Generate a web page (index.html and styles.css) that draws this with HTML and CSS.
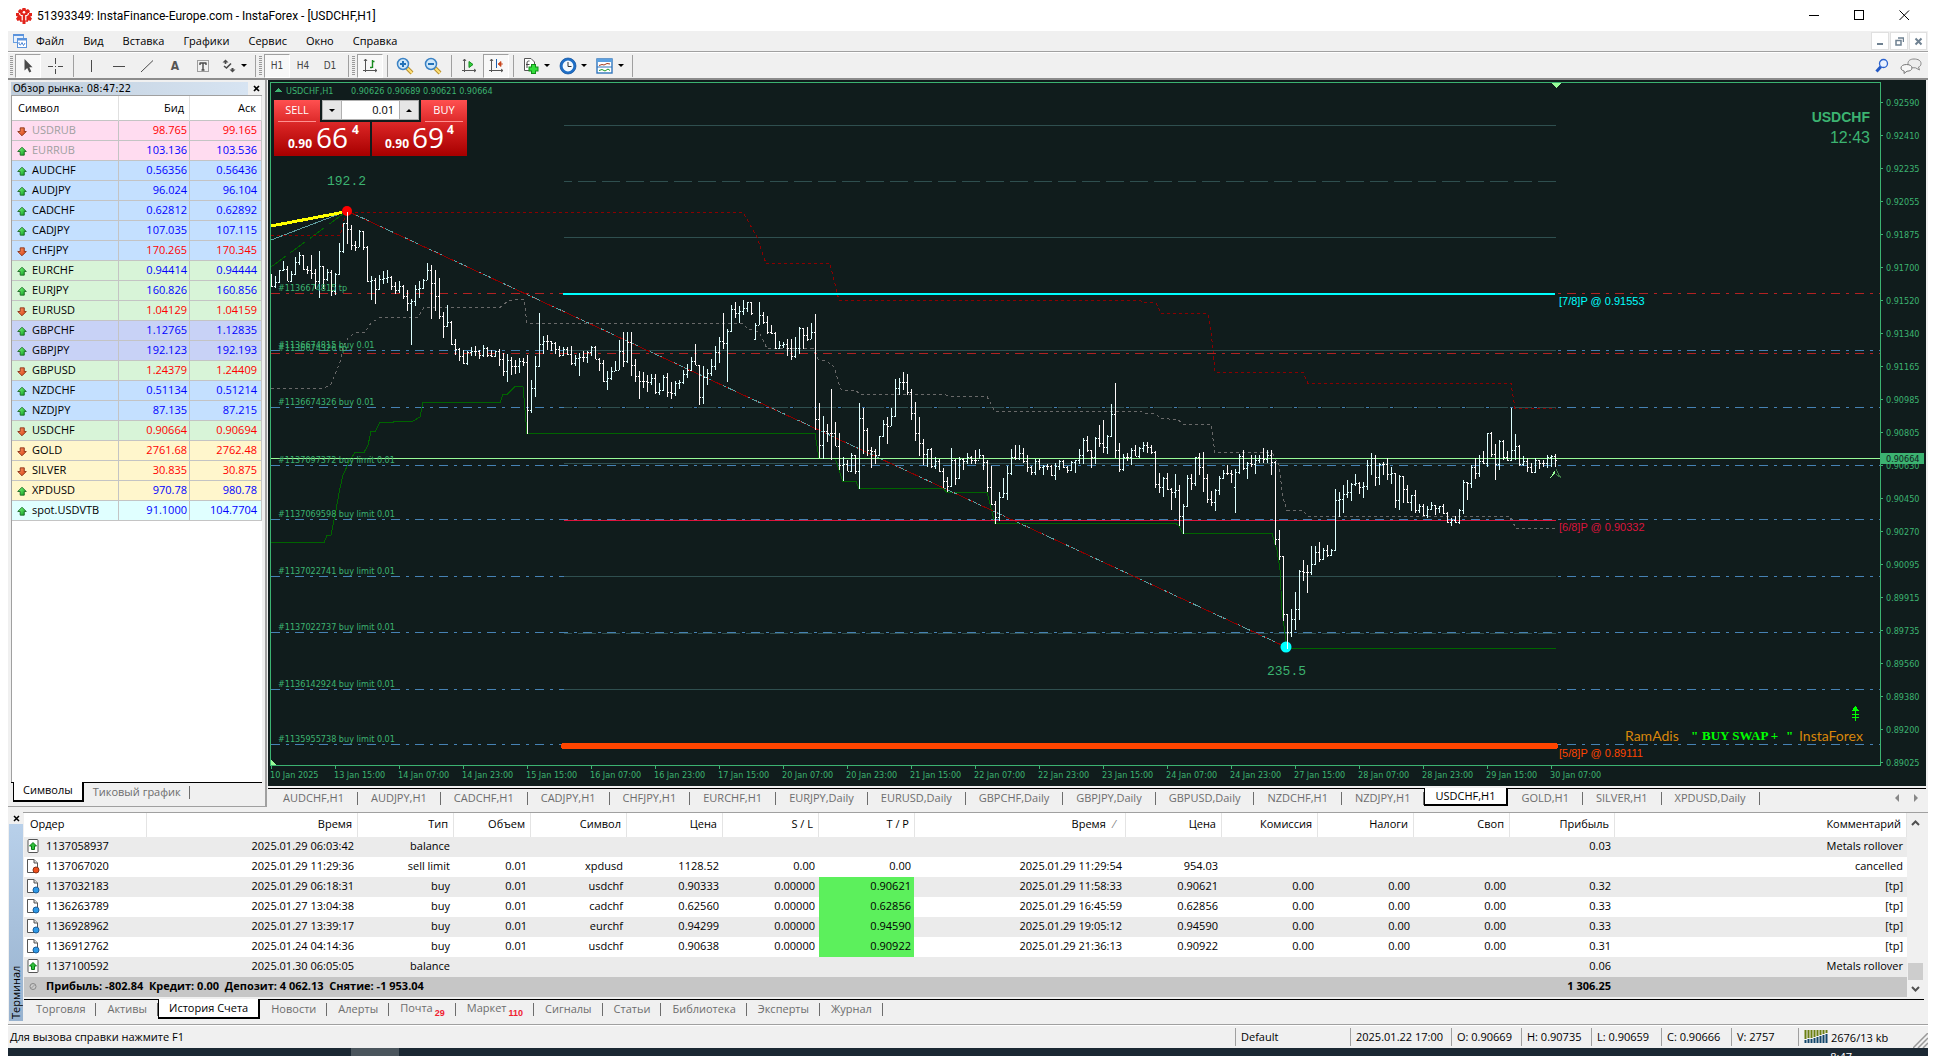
FILE: index.html
```html
<!DOCTYPE html>
<html lang="ru">
<head>
<meta charset="utf-8">
<title>51393349: InstaFinance-Europe.com - InstaForex - [USDCHF,H1]</title>
<link rel="stylesheet" href="styles.css">
</head>
<body>
<svg class="defs" aria-hidden="true">
  <defs>
    <linearGradient id="gup" x1="0" y1="0" x2="1" y2="1"><stop offset="0" stop-color="#7dff7d"/><stop offset="1" stop-color="#0a9a1e"/></linearGradient>
    <linearGradient id="gdn" x1="0" y1="0" x2="1" y2="1"><stop offset="0" stop-color="#ff9a6a"/><stop offset="1" stop-color="#d33a0c"/></linearGradient>
    <symbol id="up" viewBox="0 0 11 11"><path d="M5.5 .8L10.2 5.5H8V9.5H3.5V5.5H.8Z" fill="url(#gup)" stroke="#1c6b25"/></symbol>
    <symbol id="down" viewBox="0 0 11 11"><path d="M5.5 10.2L10.2 5.5H8V1.5H3.5V5.5H.8Z" fill="url(#gdn)" stroke="#8a3014"/></symbol>
    <symbol id="balance" viewBox="0 0 14 16"><rect x="2" y="1.500" width="10" height="13" rx="1" fill="#fff" stroke="#555"/><path d="M7 4.500L10.500 8H8.500V11.500H5.500V8H3.500Z" fill="#2fc23a" stroke="#0b7a18"/></symbol>
    <symbol id="sheet" viewBox="0 0 14 16"><path d="M1.500 1.500H8L11.500 5V14.500H1.500Z" fill="#fff" stroke="#555"/><path d="M8 1.500V5H11.500" fill="#ddd" stroke="#555"/></symbol>
  </defs>
</svg>

<div class="window">
  <header class="titlebar">
    <svg class="app-icon" width="16" height="16" viewBox="0 0 16 16"><path d="M6.500 0H9.500L10 2L12 1L14 3L13.200 5H16V8L14.200 8.500L16 10.500L14.500 13L12.500 12.300L11.500 14L9.500 13.500V16H6.500V13.500L4.500 14L3.500 12.300L1.500 13L0 10.500L1.800 8.500L0 8V5H2.800L2 3L4 1L6 2Z" fill="#e2231a"/><path d="M6.200 7V12.500M9.800 7V12.500M3.500 5C3.500 7.500 5 7.500 6.200 8M12.500 5C12.500 7.500 11 7.500 9.800 8" fill="none" stroke="#fff" stroke-width="1.200"/><circle cx="8" cy="4.300" r="1.300" fill="#fff"/></svg>
    <h1>51393349: InstaFinance-Europe.com - InstaForex - [USDCHF,H1]</h1>
    <div class="winbtns">
      <button aria-label="Свернуть"><svg width="11" height="11"><path d="M0 5.500H10" stroke="#000"/></svg></button>
      <button aria-label="Развернуть"><svg width="11" height="11"><rect x=".5" y=".5" width="9" height="9" fill="none" stroke="#000"/></svg></button>
      <button aria-label="Закрыть"><svg width="11" height="11"><path d="M.5 .5L10 10M10 .5L.5 10" stroke="#000"/></svg></button>
    </div>
  </header>

  <nav class="menubar">
    <svg width="14" height="14" viewBox="0 0 14 14"><rect x=".5" y=".5" width="10" height="8" fill="#e8f1fc" stroke="#6a9fe0"/><path d="M0 1H11" stroke="#5b93dc" stroke-width="2"/><rect x="4.500" y="4.500" width="9" height="9" fill="#fff" stroke="#5b93dc"/><path d="M4 5.500H14" stroke="#5b93dc" stroke-width="2"/><path d="M6 8V10L7.500 11L9 8.500L10.500 11.500L12 9" fill="none" stroke="#4a86d8"/></svg>
    <button>Файл</button><button>Вид</button><button>Вставка</button><button>Графики</button><button>Сервис</button><button>Окно</button><button>Справка</button>
    <div class="mdi">
      <button aria-label="Свернуть окно"><svg width="9" height="9"><path d="M1 7H7" stroke="#6f8191" stroke-width="2"/></svg></button>
      <button aria-label="Восстановить окно"><svg width="9" height="9"><path d="M3 1H8.500V5M1 3.500H6V8H1Z" fill="none" stroke="#6f8191" stroke-width="1.500"/></svg></button>
      <button aria-label="Закрыть окно"><svg width="9" height="9"><path d="M1.500 1.500L7.500 7.500M7.500 1.500L1.500 7.500" stroke="#6f8191" stroke-width="2"/></svg></button>
    </div>
  </nav>

  <div class="toolbar">
    <i class="grip"></i>
    <button class="on" aria-label="Курсор"><svg width="12" height="16"><path d="M2.500 1V12.500L5.200 10L7.300 14.500L9.300 13.500L7.300 9.300H10.500Z" fill="#4a4a4a"/></svg></button>
    <button class="w28" aria-label="Перекрестие"><svg width="16" height="16"><path d="M8.500 0V6M8.500 11V16M1 8.500H6M11 8.500H16M8.500 8V9" stroke="#4a4a4a"/></svg></button>
    <i class="sep"></i>
    <button class="w28" aria-label="Вертикальная линия"><svg width="16" height="16"><path d="M8.500 2V14" stroke="#4a4a4a"/></svg></button>
    <button class="w28" aria-label="Горизонтальная линия"><svg width="16" height="16"><path d="M2 8.500H14" stroke="#4a4a4a"/></svg></button>
    <button class="w28" aria-label="Трендовая линия"><svg width="16" height="16"><path d="M2 14L14 2.500" stroke="#4a4a4a"/></svg></button>
    <button class="w28 tool-a" aria-label="Текст">A</button>
    <button class="w28" aria-label="Текстовая метка"><svg width="16" height="16"><rect x="2.500" y="2.500" width="11" height="11" fill="none" stroke="#4a4a4a" stroke-dasharray="1 1"/><path d="M4.500 5H11.500M8 5V12M5 5V7M11 5V7M6.500 12H9.500" stroke="#4a4a4a" stroke-width="1.400"/></svg></button>
    <button class="drop w36" aria-label="Стрелки"><svg width="16" height="16"><path d="M4.500 1.500L7.500 4.500H1.500Z" fill="#4a4a4a"/><path d="M4.500 4V6M3 8L5.500 10L10 5.500" fill="none" stroke="#4a4a4a" stroke-width="1.600"/><path d="M11.500 14.500L8.500 11.500H14.500Z" fill="#4a4a4a"/><path d="M11.500 10V12" stroke="#4a4a4a" stroke-width="2"/></svg><i class="caret"></i></button>
    <i class="sep"></i><i class="grip"></i>
    <button class="on tf">H1</button><button class="tf">H4</button><button class="w28 tf">D1</button>
    <i class="sep"></i><i class="grip"></i>
    <button class="on" aria-label="Бары"><svg width="16" height="16"><path d="M3.500 1V14M1 12.500H15M2 3L3.500 1L5 3M13 11L15 12.500L13 14" fill="none" stroke="#555"/><path d="M10.500 2V10M10 3.500H12.500M8 9.500H10" stroke="#168a1e" stroke-width="1.400"/></svg></button>
    <i class="sep"></i>
    <button class="w28" aria-label="Увеличить"><svg width="18" height="18"><path d="M11 11L16 16" stroke="#b98f2c" stroke-width="4"/><path d="M11 11L16 16" stroke="#ffe27a" stroke-width="2"/><circle cx="7" cy="7" r="5.500" fill="#cfe8fa" stroke="#3b82c4" stroke-width="1.500"/><path d="M4 7H10M7 4V10" stroke="#2272b8" stroke-width="2"/></svg></button>
    <button class="w28" aria-label="Уменьшить"><svg width="18" height="18"><path d="M11 11L16 16" stroke="#b98f2c" stroke-width="4"/><path d="M11 11L16 16" stroke="#ffe27a" stroke-width="2"/><circle cx="7" cy="7" r="5.500" fill="#cfe8fa" stroke="#3b82c4" stroke-width="1.500"/><path d="M4 7H10" stroke="#2272b8" stroke-width="2"/></svg></button>
    <i class="sep"></i>
    <button class="w28" aria-label="Автопрокрутка"><svg width="16" height="16"><path d="M3.500 1V14M1 12.500H15M2 3L3.500 1L5 3M13 11L15 12.500L13 14" fill="none" stroke="#555"/><path d="M8 3.500L12 6.500L8 9.500Z" fill="#35d23f" stroke="#128a1c"/></svg></button>
    <button class="on" aria-label="Сдвиг графика"><svg width="16" height="16"><path d="M3.500 1V14M1 12.500H15M2 3L3.500 1L5 3M13 11L15 12.500L13 14" fill="none" stroke="#555"/><path d="M8.500 1V10" stroke="#1b5fae"/><path d="M10 6L13 3.500V8.500ZM12 6H15" fill="#c8441b" stroke="#c8441b" stroke-width=".8"/></svg></button>
    <i class="sep"></i>
    <button class="drop w38" aria-label="Индикаторы"><svg width="18" height="18"><path d="M2.500 1.500H9L12.500 5V13.500H2.500Z" fill="#fff" stroke="#555"/><path d="M5 11V6C5 4 6 4 7.500 4M4 7.500H7.500" fill="none" stroke="#444"/><path d="M11.500 7V17M6.500 12H16.500" stroke="#0f8f18" stroke-width="5"/><path d="M11.500 8V16M7.500 12H15.500" stroke="#33dd3b" stroke-width="3"/></svg><i class="caret"></i></button>
    <button class="drop w38" aria-label="Периоды"><svg width="18" height="18"><circle cx="9" cy="9" r="6.700" fill="#f4faff" stroke="#1f6fc6" stroke-width="2.600"/><circle cx="9" cy="9" r="8" fill="none" stroke="#0d4f9e" stroke-width=".7"/><path d="M9 5V9.500H12.500" fill="none" stroke="#333"/></svg><i class="caret"></i></button>
    <button class="drop w38" aria-label="Шаблоны"><svg width="18" height="16"><rect x="1" y="1" width="15" height="14" fill="#fff" stroke="#2f75bd" stroke-width="1.400"/><path d="M1 2.500H16" stroke="#5ba0e0" stroke-width="3"/><path d="M3 7.500L6 6.500L8 7L11 5.500L14 6" fill="none" stroke="#a33a1c"/><path d="M1 9H16" stroke="#2f75bd"/><path d="M3 12.500L6 11.500L9 13L12 11L14 12.500" fill="none" stroke="#1d9a2a"/></svg><i class="caret"></i></button>
    <i class="sep"></i>
    <div class="tb-right">
      <button aria-label="Поиск"><svg width="14" height="16"><path d="M1.500 13.500L6 8.500" stroke="#2459c4" stroke-width="3"/><circle cx="8.500" cy="5.500" r="4" fill="#eaf2ff" stroke="#2c63cf" stroke-width="1.300"/></svg></button>
      <button aria-label="Сообщество"><svg width="22" height="16"><path d="M14 1C18 1 21 2.500 21 5.500C21 7.500 20 8.500 18.500 9L19.500 12L15.500 9.800C11 10 8 8.500 8 5.500C8 2.500 10.500 1 14 1Z" fill="#ededed" stroke="#888"/><path d="M6.500 6.500C10 6.500 12 8 12 10C12 12 10 13.200 7 13.200L4 15.500L4.200 13C2 12.500 1 11.500 1 10C1 8 3 6.500 6.500 6.500Z" fill="#f7f7f7" stroke="#777"/></svg></button>
    </div>
  </div>

  <main class="work">
    <section class="watch">
      <div class="caption"><h2>Обзор рынка: 08:47:22</h2><button aria-label="Закрыть обзор рынка"><svg width="7" height="7"><path d="M1 1L6 6M6 1L1 6" stroke="#000" stroke-width="1.700"/></svg></button></div>
      <div class="watch-body">
      <table>
        <colgroup><col class="c-sym"><col class="c-bid"><col></colgroup>
        <thead><tr><th scope="col">Символ</th><th scope="col">Бид</th><th scope="col">Аск</th></tr></thead>
        <tbody>
        <tr class="pink dn off"><td><svg><use href="#down"/></svg>USDRUB</td><td>98.765</td><td>99.165</td></tr>
        <tr class="pink off"><td><svg><use href="#up"/></svg>EURRUB</td><td>103.136</td><td>103.536</td></tr>
        <tr class="blue"><td><svg><use href="#up"/></svg>AUDCHF</td><td>0.56356</td><td>0.56436</td></tr>
        <tr class="blue"><td><svg><use href="#up"/></svg>AUDJPY</td><td>96.024</td><td>96.104</td></tr>
        <tr class="blue"><td><svg><use href="#up"/></svg>CADCHF</td><td>0.62812</td><td>0.62892</td></tr>
        <tr class="blue"><td><svg><use href="#up"/></svg>CADJPY</td><td>107.035</td><td>107.115</td></tr>
        <tr class="blue dn"><td><svg><use href="#down"/></svg>CHFJPY</td><td>170.265</td><td>170.345</td></tr>
        <tr class="green"><td><svg><use href="#up"/></svg>EURCHF</td><td>0.94414</td><td>0.94444</td></tr>
        <tr class="green"><td><svg><use href="#up"/></svg>EURJPY</td><td>160.826</td><td>160.856</td></tr>
        <tr class="green dn"><td><svg><use href="#down"/></svg>EURUSD</td><td>1.04129</td><td>1.04159</td></tr>
        <tr class="violet"><td><svg><use href="#up"/></svg>GBPCHF</td><td>1.12765</td><td>1.12835</td></tr>
        <tr class="violet"><td><svg><use href="#up"/></svg>GBPJPY</td><td>192.123</td><td>192.193</td></tr>
        <tr class="green dn"><td><svg><use href="#down"/></svg>GBPUSD</td><td>1.24379</td><td>1.24409</td></tr>
        <tr class="blue"><td><svg><use href="#up"/></svg>NZDCHF</td><td>0.51134</td><td>0.51214</td></tr>
        <tr class="blue"><td><svg><use href="#up"/></svg>NZDJPY</td><td>87.135</td><td>87.215</td></tr>
        <tr class="green dn"><td><svg><use href="#down"/></svg>USDCHF</td><td>0.90664</td><td>0.90694</td></tr>
        <tr class="gold dn"><td><svg><use href="#down"/></svg>GOLD</td><td>2761.68</td><td>2762.48</td></tr>
        <tr class="gold dn"><td><svg><use href="#down"/></svg>SILVER</td><td>30.835</td><td>30.875</td></tr>
        <tr class="gold"><td><svg><use href="#up"/></svg>XPDUSD</td><td>970.78</td><td>980.78</td></tr>
        <tr class="cyan"><td><svg><use href="#up"/></svg>spot.USDVTB</td><td>91.1000</td><td>104.7704</td></tr>
        </tbody>
      </table>
      </div>
      <div class="tabs watch-tabs"><button class="active">Символы</button><button>Тиковый график</button></div>
    </section>

    <section class="charts">
      <div class="chart">
        <svg class="plot" viewBox="268 80 1658 706" role="img" aria-label="USDCHF, H1">
          <g class="orders">
            <path class="sell" d="M271 293.500H1880M271 353.500H1880"/>
            <path class="buy" d="M271 350.500H1880M271 407.500H1880M271 465.500H1880M271 519.500H1880M271 576.500H1880M271 632.500H1880M271 689.500H1880M271 744.500H1880"/>
          </g>
          <path class="lvl" d="M564 125.500H1556M564 237.500H1556M564 350.500H1556M564 463.500H1556M564 576.500H1556M564 689.500H1556"/>
          <path class="lvl dash" d="M564 181.500H1556M564 407.500H1556M564 633.500H1556"/>
          <path d="M271 240L347 211" stroke="#5f9ea0"/>
          <path d="M271 267L347 211" stroke="#006400" stroke-dasharray="18 6"/>
          <path class="upper" d="M271 235.500H340L346 212.500H743L757 237L766 263.500H830L834 280L839 300.500H1140L1144 302.500H1156L1161 313.500H1208L1211 330L1215 372.500H1303L1308 383.500H1511L1515 408.500H1556"/>
          <path class="middle" d="M271 388.500H323L331 384L340 362L343 347L348 338L356 332.500H365L371 323L380 317.500H418L424 307.500H500L508 301L515 299.500H524L527 323.500H743L748 329L759 332L767 348.500H813L818 359L828 362L834 367L840 387L842 390.500H856L860 394.500H945L950 396.500H987L995 411.500H1141L1145 413.500H1156L1160 418.500L1178 419.500L1183 424.500H1211L1215 452.500H1272L1279 465L1283 498L1287 510.500H1303L1308 516.500H1510L1516 528.500H1556"/>
          <path class="lower" d="M271 542.500H324L327 535.500H331L335 515L340 488L343 475L350 460L355 452.500H364L368 445L371 431.500H375L380 422.500H393L394 421.500H412L420 417L423 402.500H500L503 394.500H507L515 386.500H523L527 433.500H815L819 458.500H835L838 467L843 481.500H856L859 488.500H943L947 492.500H987L995 523.500H1176L1179 526L1183 533.500H1272L1277 550L1280 570L1282 610L1286 642L1288 648.500H1556"/>
          <path d="M347 211L1286 647" stroke="#8b0000"/>
          <path d="M356 215L1286 647" stroke="#5f9ea0" stroke-dasharray="3 2 5 1 3 13"/>
          <path d="M271 226L342 212.500" stroke="#ff0" stroke-width="3"/>
          <path d="M563 294H1555" stroke="#0ff" stroke-width="2"/>
          <path d="M564 520.500H1556" stroke="#dc143c"/>
          <path d="M564 746H1555" stroke="#ff4500" stroke-width="6" stroke-linecap="round"/>
          <path d="M271 458.500H1880" stroke="#98fb98"/>
          <circle cx="347" cy="211" r="5" fill="#f00"/>
          <circle cx="1286" cy="647" r="5.500" fill="#0ff"/>
          <path id="bars-down" stroke="#fffafa"/>
          <path id="bars-up" stroke="#e0ffff"/>
          <path d="M1552 83H1561L1556.500 88Z" fill="#98fb98"/>
          <path d="M271 760L277 766H271Z" fill="#98fb98"/>
          <path d="M1555.500 469L1550 478L1555 474Z" fill="#98fb98"/><path d="M1556 469.500L1560.500 477.500L1556 474" fill="none" stroke="#3d7a45"/>
          <path d="M274 92H282L278 88Z" fill="#3cb371"/>
          <path class="frame" d="M270.500 766V82.500H1880.500V765.500H270"/>
          <path class="frame" id="ticks"/>
          <g class="small">
            <text x="286" y="94">USDCHF,H1</text>
            <text x="351" y="94">0.90626 0.90689 0.90621 0.90664</text>
            <text x="278" y="291">#1136674815 tp</text>
            <text x="278" y="348">#1136674815 buy 0.01</text>
            <text x="278" y="351">#1136674326 tp</text>
            <text x="278" y="405">#1136674326 buy 0.01</text>
            <text x="278" y="463">#1137097372 buy limit 0.01</text>
            <text x="278" y="517">#1137069598 buy limit 0.01</text>
            <text x="278" y="574">#1137022741 buy limit 0.01</text>
            <text x="278" y="630">#1137022737 buy limit 0.01</text>
            <text x="278" y="687">#1136142924 buy limit 0.01</text>
            <text x="278" y="742">#1135955738 buy limit 0.01</text>
          </g>
          <g class="small" id="prices"></g>
          <g class="small" id="times"></g>
          <rect x="1881" y="453" width="43" height="11" fill="#3cb371"/>
          <text class="small bid" x="1886" y="462">0.90664</text>
          <text class="count" x="327" y="185">192.2</text>
          <text class="count" x="1267" y="675">235.5</text>
          <g class="murrey">
            <text x="1559" y="305" fill="#0ff">[7/8]P @ 0.91553</text>
            <text x="1559" y="531" fill="#dc143c">[6/8]P @ 0.90332</text>
            <text x="1559" y="757" fill="#ff4500">[5/8]P @ 0.89111</text>
          </g>
          <text class="pair" x="1870" y="122">USDCHF</text>
          <text class="clock" x="1870" y="143">12:43</text>
          <text class="sig" x="1625" y="741">RamAdis</text>
          <text class="swap" x="1691" y="740">"</text><text class="swap" x="1702" y="740">BUY SWAP +</text><text class="swap" x="1786" y="740">"</text>
          <text class="sig" x="1799" y="741">InstaForex</text>
          <path d="M1855.500 708V721M1852 714.500H1859M1852 717.500H1859" stroke="#0f0" fill="none"/><path d="M1851.500 711L1855.500 706L1859.500 711Z" fill="#0f0"/>
        </svg>
        <div class="trade">
          <button class="sell-btn"><span class="side">SELL</span><span class="quote"><b>0.90</b><big>66</big><sup>4</sup></span></button>
          <button class="buy-btn"><span class="side">BUY</span><span class="quote"><b>0.90</b><big>69</big><sup>4</sup></span></button>
          <div class="volume"><button aria-label="Меньше"><i class="caret"></i></button><input aria-label="Объем" value="0.01"><button aria-label="Больше"><i class="caret flip"></i></button></div>
        </div>
      </div>
      <div class="tabs chart-tabs">
        <button>AUDCHF,H1</button><button>AUDJPY,H1</button><button>CADCHF,H1</button><button>CADJPY,H1</button><button>CHFJPY,H1</button><button>EURCHF,H1</button><button>EURJPY,Daily</button><button>EURUSD,Daily</button><button>GBPCHF,Daily</button><button>GBPJPY,Daily</button><button>GBPUSD,Daily</button><button>NZDCHF,H1</button><button>NZDJPY,H1</button><button class="active">USDCHF,H1</button><button>GOLD,H1</button><button>SILVER,H1</button><button>XPDUSD,Daily</button>
        <div class="scrollers"><svg width="4" height="8"><path d="M4 0V8L0 4Z" fill="#888"/></svg><svg width="4" height="8"><path d="M0 0V8L4 4Z" fill="#888"/></svg></div>
      </div>
    </section>
  </main>

  <section class="terminal">
    <div class="strip"><button aria-label="Закрыть терминал"><svg width="7" height="7"><path d="M1 1L6 6M6 1L1 6" stroke="#000" stroke-width="1.500"/></svg></button><h2>Терминал</h2></div>
    <div class="term-main">
      <div class="term-body">
        <table>
          <colgroup><col class="w123"><col class="w211"><col class="w96"><col class="w77"><col class="w96"><col class="w96"><col class="w96"><col class="w96"><col class="w211"><col class="w96"><col class="w96"><col class="w96"><col class="w96"><col class="w105"><col></colgroup>
          <thead><tr><th scope="col">Ордер</th><th scope="col">Время</th><th scope="col">Тип</th><th scope="col">Объем</th><th scope="col">Символ</th><th scope="col">Цена</th><th scope="col">S / L</th><th scope="col">T / P</th><th scope="col">Время <i class="sort">⁄</i></th><th scope="col">Цена</th><th scope="col">Комиссия</th><th scope="col">Налоги</th><th scope="col">Своп</th><th scope="col">Прибыль</th><th scope="col">Комментарий</th></tr></thead>
          <tbody>
          <tr><td><svg><use href="#balance"/></svg>1137058937</td><td>2025.01.29 06:03:42</td><td>balance</td><td></td><td></td><td></td><td></td><td></td><td></td><td></td><td></td><td></td><td></td><td>0.03</td><td>Metals rollover</td></tr>
          <tr><td><svg><use href="#sheet"/><circle cx="10" cy="12" r="3" fill="#f0501c" stroke="#8a3014"/></svg>1137067020</td><td>2025.01.29 11:29:36</td><td>sell limit</td><td>0.01</td><td>xpdusd</td><td>1128.52</td><td>0.00</td><td>0.00</td><td>2025.01.29 11:29:54</td><td>954.03</td><td></td><td></td><td></td><td></td><td>cancelled</td></tr>
          <tr><td><svg><use href="#sheet"/><circle cx="10" cy="12" r="3" fill="#2f9be8" stroke="#1b5c98"/></svg>1137032183</td><td>2025.01.29 06:18:31</td><td>buy</td><td>0.01</td><td>usdchf</td><td>0.90333</td><td>0.00000</td><td class="hit">0.90621</td><td>2025.01.29 11:58:33</td><td>0.90621</td><td>0.00</td><td>0.00</td><td>0.00</td><td>0.32</td><td>[tp]</td></tr>
          <tr><td><svg><use href="#sheet"/><circle cx="10" cy="12" r="3" fill="#2f9be8" stroke="#1b5c98"/></svg>1136263789</td><td>2025.01.27 13:04:38</td><td>buy</td><td>0.01</td><td>cadchf</td><td>0.62560</td><td>0.00000</td><td class="hit">0.62856</td><td>2025.01.29 16:45:59</td><td>0.62856</td><td>0.00</td><td>0.00</td><td>0.00</td><td>0.33</td><td>[tp]</td></tr>
          <tr><td><svg><use href="#sheet"/><circle cx="10" cy="12" r="3" fill="#2f9be8" stroke="#1b5c98"/></svg>1136928962</td><td>2025.01.27 13:39:17</td><td>buy</td><td>0.01</td><td>eurchf</td><td>0.94299</td><td>0.00000</td><td class="hit">0.94590</td><td>2025.01.29 19:05:12</td><td>0.94590</td><td>0.00</td><td>0.00</td><td>0.00</td><td>0.33</td><td>[tp]</td></tr>
          <tr><td><svg><use href="#sheet"/><circle cx="10" cy="12" r="3" fill="#2f9be8" stroke="#1b5c98"/></svg>1136912762</td><td>2025.01.24 04:14:36</td><td>buy</td><td>0.01</td><td>usdchf</td><td>0.90638</td><td>0.00000</td><td class="hit">0.90922</td><td>2025.01.29 21:36:13</td><td>0.90922</td><td>0.00</td><td>0.00</td><td>0.00</td><td>0.31</td><td>[tp]</td></tr>
          <tr><td><svg><use href="#balance"/></svg>1137100592</td><td>2025.01.30 06:05:05</td><td>balance</td><td></td><td></td><td></td><td></td><td></td><td></td><td></td><td></td><td></td><td></td><td>0.06</td><td>Metals rollover</td></tr>
          </tbody>
          <tfoot><tr><td colspan="13"><svg><circle cx="7" cy="8.500" r="3" fill="#ccc" stroke="#888"/><path d="M5 10.500L9 6.500" stroke="#999"/></svg>Прибыль: -802.84&#160; Кредит: 0.00&#160; Депозит: 4 062.13&#160; Снятие: -1 953.04</td><td>1 306.25</td><td></td></tr></tfoot>
        </table>
        <div class="scrollbar"><svg width="9" height="6"><path d="M1 5L4.500 1.500L8 5" fill="none" stroke="#505050" stroke-width="2"/></svg><i class="track"></i><i class="thumb"></i><svg width="9" height="6"><path d="M1 1L4.500 4.500L8 1" fill="none" stroke="#505050" stroke-width="2"/></svg></div>
      </div>
      <div class="tabs term-tabs"><button>Торговля</button><button>Активы</button><button class="active">История Счета</button><button>Новости</button><button>Алерты</button><button>Почта<sub>29</sub></button><button>Маркет<sub>110</sub></button><button>Сигналы</button><button>Статьи</button><button>Библиотека</button><button>Эксперты</button><button>Журнал</button></div>
    </div>
  </section>

  <footer class="status">
    <span class="help">Для вызова справки нажмите F1</span>
    <span class="s-profile">Default</span><span class="s-time">2025.01.22 17:00</span><span class="s-val">O: 0.90669</span><span class="s-val">H: 0.90735</span><span class="s-val">L: 0.90659</span><span class="s-val">C: 0.90666</span><span class="s-vol">V: 2757</span>
    <span class="s-net"><svg width="24" height="14"><path d="M1.500 0V9M4.500 0V8M7.500 0V8M10.500 0V7M13.500 0V6M16.500 0V5M19.500 0V4M22.500 0V3" stroke="#6b7f12" stroke-width="2"/><path d="M1.500 10V13M4.500 9V13M7.500 9V13M10.500 8V13M13.500 7V13M16.500 6V13M19.500 5V13M22.500 4V13" stroke="#12466b" stroke-width="2"/></svg>2676/13 kb</span>
    <svg class="size-grip" width="15" height="15"><path d="M0 15L15 0M5 15L15 5M10 15L15 10" stroke="#999" stroke-width="1.500"/></svg>
  </footer>
  <div class="taskbar"><i></i><span>8:47</span></div>
</div>
<script src="chart.js"></script>
</body>
</html>
```

FILE: styles.css
```css
* { box-sizing: border-box; }
html, body { height: 100%; }
body {
  margin: 0;
  background: #fff;
  color: #000;
  font: 11px/16px "Open Sans", "Noto Sans", sans-serif;
  overflow: hidden;
}
button { font: inherit; color: inherit; background: none; border: 0; padding: 0; margin: 0; }
h1, h2 { font: inherit; margin: 0; }
i { font-style: normal; }
.defs { position: absolute; width: 0; height: 0; }

.window { height: 100vh; margin: 0 8px; display: flex; flex-direction: column; background: #f0f0f0; }

.titlebar { flex: none; height: 31px; background: #fff; display: flex; align-items: center; gap: 5px; padding-left: 8px; }
.titlebar h1 { font: 12px/16px Roboto, sans-serif; }
.winbtns { margin-left: auto; display: flex; padding-right: 1px; }
.winbtns button { width: 45px; height: 31px; display: grid; place-items: center; }

.menubar { flex: none; height: 21px; display: flex; align-items: center; border-bottom: 1px solid #a0a0a0; padding-left: 5px; gap: 19px; }
.menubar > svg { margin-right: -10px; }
.mdi { margin-left: auto; display: flex; gap: 1px; padding-right: 1px; }
.mdi button { width: 18px; height: 18px; background: #fff; border: 1px solid #e0e0e0; display: grid; place-items: center; }

.toolbar { flex: none; height: 28px; display: flex; align-items: center; border-top: 1px solid #fff; border-bottom: 2px solid #8c8c8c; padding-left: 2px; }
.toolbar button { width: 26px; height: 24px; flex: none; display: flex; align-items: center; justify-content: center; }
.toolbar .w28 { width: 28px; }
.toolbar .w36 { width: 34px; }
.toolbar .w38 { width: 37px; }
.toolbar .on { border: 1px solid; border-color: #a0a0a0 #fff #fff #a0a0a0; background: #f8f8f8; }
.toolbar .drop { justify-content: center; gap: 4px; }
.tool-a { font: bold 12px "DejaVu Sans Condensed", sans-serif; color: #555; }
.tf { font: 10px "DejaVu Sans Condensed", sans-serif; color: #444; }
.grip { flex: none; width: 3px; height: 20px; margin-right: 2px; background: repeating-linear-gradient(#9a9a9a 0 1px, #f0f0f0 1px 2px); }
.sep { flex: none; width: 1px; height: 22px; margin: 0 3px 0 4px; background: #a0a0a0; }
.caret { width: 0; height: 0; border: 3px solid transparent; border-top-color: #000; border-bottom: 0; }
.caret.flip { border-top: 0; border-bottom: 3px solid #000; }
.tb-right { margin-left: auto; display: flex; padding-right: 3px; }
.tb-right button { width: 29px; }

.work { flex: 1; min-height: 0; display: flex; }

.watch { flex: none; width: 259px; display: flex; flex-direction: column; border-right: 2px solid #a0a0a0; border-bottom: 1px solid #a0a0a0; padding: 1px 3px 4px; }
.caption { height: 14px; display: flex; align-items: center; margin-right: -2px; }
.caption h2 { flex: 1; height: 13px; padding-left: 2px; font: 11px/13px "DejaVu Sans Condensed", "DejaVu Sans", sans-serif; background: linear-gradient(90deg, #bfcddb, #d7e4f2); }
.caption button { width: 16px; height: 13px; display: grid; place-items: center; }
.watch-body { flex: 1; min-height: 0; overflow: hidden; background: #fff; border-top: 1px solid #a0a0a0; border-left: 1px solid #a0a0a0; }
table { width: 100%; table-layout: fixed; border-collapse: separate; border-spacing: 0; }
th { font-weight: normal; background: #fff; }
.c-sym { width: 107px; }
.c-bid { width: 71px; }
.watch th { height: 25px; text-align: right; padding: 0 5px; border-right: 1px solid #e0e0e0; border-bottom: 1px solid #c4c4c4; }
.watch th:first-child { text-align: left; padding-left: 6px; }
.watch td { height: 20px; line-height: 16px; padding: 0 2px 2px 0; text-align: right; color: #00f; border-right: 1px solid #c4c4c4; border-bottom: 1px solid #c4c4c4; }
.watch td:last-child { padding-right: 4px; }
.watch td:first-child { text-align: left; color: #000; padding-left: 5px; }
.watch td svg { width: 10px; height: 11px; margin-right: 5px; vertical-align: -3px; }
.watch .dn td { color: #f00; }
.watch .dn td:first-child { color: #000; }
.watch .off td:first-child { color: #a0a0a0; }
.pink { background: #ffdcf0; }
.blue { background: #c4e0ff; }
.green { background: #d8f4d8; }
.violet { background: #c8d2f6; }
.gold { background: #fff6cc; }
.cyan { background: #e0ffff; }

.tabs { flex: none; display: flex; border-top: 1px solid #000; color: #6d6d6d; }
.tabs button { position: relative; padding: 0 12px 2px; height: 19px; white-space: nowrap; }
.tabs button::after { content: ""; position: absolute; right: 0; top: 3px; height: 13px; width: 1px; background: #6d6d6d; }
.tabs .active { margin-top: -1px; height: 20px; background: #fff; color: #000; border: 1px solid #000; border-top: 0; border-right-width: 2px; border-bottom-width: 2px; }
.tabs .active::after { display: none; }
.watch-tabs { padding-left: 2px; height: 20px; }
.watch-tabs button { padding: 0 9px 2px; }

.charts { flex: 1; min-width: 0; display: flex; flex-direction: column; padding: 0 2px 0 1px; }
.chart { position: relative; flex: 1; min-height: 0; background: #101c1c; margin-bottom: 2px; }
.plot { display: block; width: 100%; height: 100%; }
.plot path { fill: none; shape-rendering: crispEdges; }
.plot path[fill] { fill: revert-layer; }
.plot .frame { stroke: #3cb371; }
.orders path { stroke-dasharray: 9 6 3 6; }
.sell { stroke: #b22222; }
.buy { stroke: #4682b4; }
.lvl { stroke: #2f4f4f; }
.lvl.dash { stroke-dasharray: 18 6; stroke-dashoffset: 10; }
.upper { stroke: #8b0000; stroke-dasharray: 3 3; }
.middle { stroke: #696969; stroke-dasharray: 3 3; }
.lower { stroke: #006400; }
.small { font: 9px "DejaVu Sans Condensed", "DejaVu Sans", sans-serif; fill: #3cb371; }
.small.bid { fill: #101c1c; }
.count { font: 13px "Liberation Mono", monospace; fill: #3cb371; }
.murrey { font: 11px "Liberation Sans", sans-serif; }
.pair { font: bold 14px "Liberation Sans", sans-serif; fill: #3cb371; text-anchor: end; }
.clock { font: 16px "Liberation Sans", sans-serif; fill: #3cb371; text-anchor: end; }
.sig { font: 14px Lato, sans-serif; fill: #d8860b; }
.swap { font: bold 13px "Liberation Serif", serif; fill: #0f0; }

.trade { position: absolute; left: 6px; top: 20px; display: flex; gap: 2px; color: #fff; }
.trade > button { width: 96px; height: 56px; display: flex; flex-direction: column; text-align: left; background: linear-gradient(#ff5050, #d42020 50%, #a80000); border-bottom: 1px solid #a00; }
.sell-btn { clip-path: polygon(0 0, 46px 0, 46px 22px, 100% 22px, 100% 100%, 0 100%); }
.trade .buy-btn { width: 95px; clip-path: polygon(49px 0, 100% 0, 100% 100%, 0 100%, 0 22px, 49px 22px); }
.side { width: 38px; height: 22px; margin-left: 4px; font-size: 11px; line-height: 20px; text-align: center; border-bottom: 1px solid #ff9090; }
.buy-btn .side { margin-left: 53px; }
.quote { display: flex; align-items: flex-end; padding-left: 14px; height: 33px; gap: 4px; }
.buy-btn .quote { gap: 3px; padding-left: 13px; }
.quote b { font: bold 12px/22px "Open Sans", sans-serif; }
.quote big { font: 28px/36px "Open Sans", sans-serif; }
.quote sup { font: bold 12px/16px "Open Sans", sans-serif; align-self: flex-start; height: 16px; }
.volume { position: absolute; left: 48px; top: 0; width: 97px; height: 20px; display: flex; border: 1px solid #b0b0b0; background: #fff; }
.volume button { width: 18px; display: grid; place-items: center; background: #e6e6e6; }
.volume input { flex: 1; min-width: 0; border: 0; border-left: 1px solid #b0b0b0; border-right: 1px solid #b0b0b0; padding: 0 5px; text-align: right; font: inherit; }

.chart-tabs { height: 19px; padding-left: 2px; }
.chart-tabs button { padding: 0 14px 2px 13px; }
.chart-tabs .active { height: 18px; padding: 0 11px 0 10px; }
.scrollers { margin-left: auto; display: flex; gap: 15px; padding: 5px 8px 0 0; }

.terminal { flex: none; display: flex; margin-top: 5px; border-bottom: 1px solid #a0a0a0; padding-bottom: 3px; }
.strip { width: 15px; display: flex; flex-direction: column; padding-left: 1px; }
.strip button { height: 12px; display: grid; place-items: center; }
.strip h2 { flex: 1; writing-mode: vertical-rl; transform: rotate(180deg); line-height: 13px; padding-top: 2px; background: linear-gradient(0deg, #b8d0ea, #98b2ce); }
.term-main { flex: 1; min-width: 0; padding: 0 4px 2px 1px; border-top: 1px solid #a0a0a0; }
.term-body { display: flex; padding-bottom: 2px; }
.term-body table { flex: 1; background: #fff; }
.terminal th { height: 24px; text-align: right; padding: 0 5px 2px 0; border-right: 1px solid #e4e4e4; }
.terminal th:first-child { text-align: left; padding-left: 6px; }
.terminal td { height: 20px; text-align: right; padding: 0 4px 2px 0; white-space: nowrap; }
.terminal td:first-child { text-align: left; padding-left: 2px; }
.terminal td svg { width: 14px; height: 16px; margin-right: 6px; vertical-align: -4px; }
.terminal tbody tr:nth-child(odd) { background: #ebebeb; }
.terminal tfoot tr { background: #c6c6c6; font-weight: bold; }
.terminal .hit { background: linear-gradient(#5cf05c, #5cf05c) no-repeat 0 0 / calc(100% - 1px) 100%; }
.sort { padding: 0 5px; color: #777; }
.w123 { width: 123px; } .w211 { width: 211px; } .w96 { width: 96px; } .w77 { width: 77px; } .w105 { width: 105px; }
.scrollbar { flex: none; width: 17px; display: flex; flex-direction: column; align-items: center; padding: 7px 0 5px; }
.scrollbar .track { flex: 1; }
.scrollbar .thumb { width: 15px; height: 17px; margin-bottom: 6px; background: #cdcdcd; }
.term-tabs { height: 20px; }
.term-tabs button { padding: 0 11px 2px; }
.term-tabs button:first-child { padding-left: 12px; }
.term-tabs .active { padding: 0 10px; }
.term-tabs sub { font: bold 9px/9px "Liberation Sans", sans-serif; color: #f02030; margin-left: 2px; vertical-align: -4px; }

.status { flex: none; height: 23px; display: flex; align-items: center; position: relative; border-top: 1px solid #fff; }
.status span { height: 18px; line-height: 17px; border-left: 1px solid #a0a0a0; padding-left: 5px; white-space: nowrap; }
.status .help { flex: 1; border: 0; padding-left: 2px; }
.s-profile { width: 115px; }
.s-time { width: 101px; }
.s-val { width: 70px; }
.s-vol { width: 67px; }
.status .s-net { width: 130px; display: flex; align-items: center; gap: 3px; }
.size-grip { position: absolute; right: 0; bottom: 0; }

.taskbar { flex: none; height: 8px; background: #1b2833; overflow: hidden; display: flex; color: #fff; }
.taskbar i { width: 48px; margin-left: 343px; background: #4a555d; }
.taskbar span { margin-left: auto; padding-right: 76px; line-height: 18px; }
```

FILE: chart.js
```js
// Each bar: high, low, close. A bar opens at the previous close unless a fourth value is given.
// Values are thirds of a pixel below the segment's top.
const segments = [
  { top: 80, bars: "583 622 620,590 626 607,570 610 570,545 575 568,560 605 603,575 608 583,533 585 547,516 557 527,527 570 568,558 583 570,525 598 580,568 628 605,513 656 560,558 628 597,567 603 578,570 650 633,580 645 583,490 587 514,430 520 430,396 492 447,436 510 497,483 515 502,450 503 455,453 510 502,498 606 604,588 660 600,595 672 628,585 632 597,573 612 595,570 610 592,590 632 620,607 642 632,603 640 620,615 657 650,630 695 670,657 795 663,617 680 627,605 655 625,597 628 600,549 602 572,555 717 610,570 695 650,595 717 710,698 774 738,675 742 727,723 795 792,777 825 808,805 843 828,810 852 850,815 855 818,803 830 815,800 830 815,810 838 827,795 832 805,802 832 827,810 833 830,813 833 815,808 858 837,820 888 873,823 907 840,833 885 860,840 883 858,835 880 845,835 860 847,825 1062 990,900 1001 925,828 951 860,699 863 793,770 823 785,765 810 785,783 813 790,787 823 808,800 832 825,803 828 808,803 825 823,798 855 850,827 858 835,820 890 832,813 847 832,815 850 817,798 828 802,798 838 838,835 873 850,840 908 903,875 930 895,862 902 873,845 875 872,780 872 815,756 862 843,756 850 787,758 890 857,837 908 890,873 957 905,878 925 905,885 937 908,882 915 895,882 943 938,910 945 930,887 933 892,880 953 938,908 957 940,905 950 910,902 927 907,870 912 882" },
  { top: 270, bars: "282 325 302 312,262 305 274,222 287 286,286 407 383,288 402 322,297 345 309,267 318 290,228 302 247,201 279 214,129 237 220,177 336 184,105 188 118,96 145 130,108 159 124,90 137 115,96 126 98,96 137 130,159 212 166 208,96 167 136,126 162 157,138 194 187,165 194 190,188 237 235,213 239 226,216 236 223,207 258 235,207 272 259,201 266 235,171 252 175,174 237 197,171 213 207,159 209 187,132 482 448,399 566 526,438 567 485,462 518 490,357 570 490,456 530 528,489 600 585,561 635 583,570 605 603,549 606 556,555 614 604,399 657 445,414 552 481,474 558 541,531 594 545,537 582 556,498 560 499,450 502 463,441 522 469,414 470 439,327 443 355,324 375 337,306 361 337,312 375 367,357 450 430,396 513 490,441 558 520,507 585 553,537 591 538,534 594 589,561 597 574,567 608 604,594 656 634,621 668 649,534 652 571,567 647 625,561 627 568,564 602 574,549 584 563,558 584 571,540 582 571,537 567 556,555 602 577,570 666 652,588 707 703,693 762 742,666 753 682,625 686 670,588 690 610,537 617 562,525 571 565,525 572 550,534 579 574,555 606 592,588 617 608,567 617 574,567 600 592,586 615 590,582 600 590,585 618 616,579 630 589,570 600 575,570 594 592,590 609 601,573 603 577,570 609 571,537 582 556,504 582 511,498 546 541,540 594 562,501 582 505,465 531 520,450 549 532,495 552 499,402 503 433,339 566 541,519 606 598,552 603 562,549 575 562,534 585 541,525 560 559,531 564 535,516 546 526,516 549 532,525 552 547,543 654 643" },
  { top: 340, bars: "399 459 441 433,411 471 414,399 450 447,444 510 456,402 474 451,435 560 528,492 582 498,405 503 414,402 450 430,351 438 352,339 405 381,336 456 414,402 489 477,453 500 487,447 513 451,408 465 414,390 417 399,375 405 400,390 430 403,387 519 396 442,342 402 349,330 390 385,366 417 369,345 381 373,345 402 361,345 369 355,324 369 358,330 369 345,330 405 367,363 615 597,570 660 649,648 843 823,822 927 877,807 891 838,756 870 808,690 840 694,660 723 697,675 759 697,618 705 673,618 675 637,606 666 658,624 660 631,615 651 646,627 648 631,447 633 481,456 531 478,435 519 463,420 474 457,429 483 433,402 438 430,427 462 442,426 474 439,360 450 376,339 405 355,345 438 412,370 435 373,366 405 373,354 420 403,381 433 400,399 504 481,405 510 409,408 489 448,435 489 487,465 513 466,450 519 511,492 519 498,492 528 526,498 534 508,486 510 495,495 525 505,500 519 499,492 522 520,516 550 547,535 558 541,528 549 547,507 552 511,420 522 426,426 480 430,375 444 382,355 419 400,345 411 364,333 372 369,279 381 280,276 351 343,312 420 373,300 390 303,300 361 352,333 364 361,204 363 331,282 360 319,315 378 373,348 378 364,354 396 381,369 399 396,354 399 361,360 387 370,360 381 370,345 384 352,345 381 349,342 381 361" }
];

let x = 271, previous = 278, up = "", down = "";
for (const segment of segments) {
  const y = v => segment.top + Math.floor(v / 3);
  for (const bar of segment.bars.split(",")) {
    const [high, low, close, open] = bar.split(" ").map(Number);
    const from = open === undefined ? previous : y(open);
    const to = y(close);
    const d = `M${x + .5} ${y(high)}V${y(low)}M${x - 1} ${from + .5}H${x}M${x + 1} ${to + .5}H${x + 2}`;
    if (to < from) up += d; else down += d;
    previous = to;
    x += 4;
  }
}
document.getElementById("bars-up").setAttribute("d", up);
document.getElementById("bars-down").setAttribute("d", down);

const prices = ["0.92590", "0.92410", "0.92235", "0.92055", "0.91875", "0.91700", "0.91520", "0.91340", "0.91165", "0.90985", "0.90805", "0.90630", "0.90450", "0.90270", "0.90095", "0.89915", "0.89735", "0.89560", "0.89380", "0.89200", "0.89025"];
const times = ["10 Jan 2025", "13 Jan 15:00", "14 Jan 07:00", "14 Jan 23:00", "15 Jan 15:00", "16 Jan 07:00", "16 Jan 23:00", "17 Jan 15:00", "20 Jan 07:00", "20 Jan 23:00", "21 Jan 15:00", "22 Jan 07:00", "22 Jan 23:00", "23 Jan 15:00", "24 Jan 07:00", "24 Jan 23:00", "27 Jan 15:00", "28 Jan 07:00", "28 Jan 23:00", "29 Jan 15:00", "30 Jan 07:00"];
function label(parent, left, baseline, text) {
  const node = document.createElementNS("http://www.w3.org/2000/svg", "text");
  node.setAttribute("x", left);
  node.setAttribute("y", baseline);
  node.textContent = text;
  document.getElementById(parent).append(node);
}
let ticks = "";
prices.forEach((price, i) => {
  label("prices", 1886, 106 + 33 * i, price);
  ticks += `M1881 ${102.5 + 33 * i}H1883`;
});
times.forEach((time, i) => {
  label("times", 270 + 64 * i, 778, time);
  ticks += `M${271.5 + 64 * i} 766V769`;
});
document.getElementById("ticks").setAttribute("d", ticks);
```
